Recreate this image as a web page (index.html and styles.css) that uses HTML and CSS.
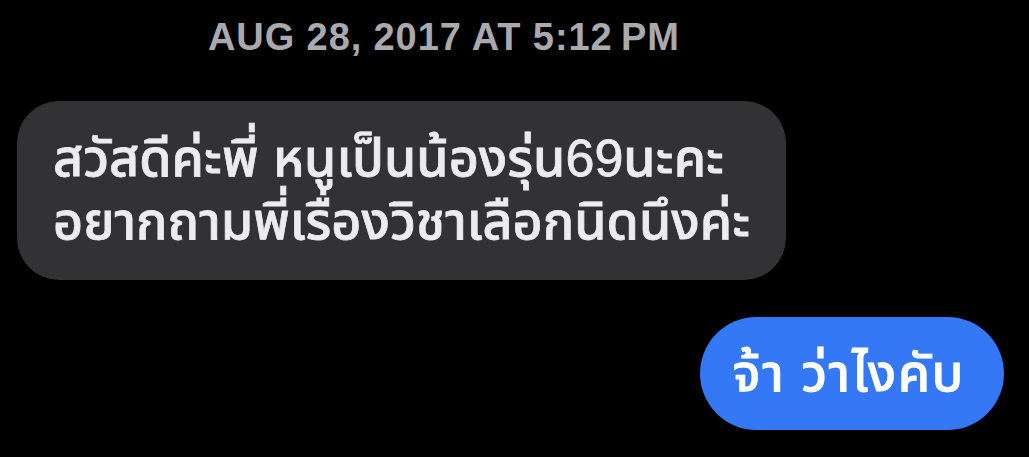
FILE: index.html
```html
<!DOCTYPE html>
<html lang="th">
<head>
<meta charset="UTF-8">
<meta name="viewport" content="width=device-width, initial-scale=1.0">
<title>Messages</title>
<link rel="stylesheet" href="styles.css">
</head>
<body>
    <div class="thread">
        <div class="stamp">AUG 28, 2017 AT 5:12&#8239;PM</div>
        <div class="bubble them">สวัสดีค่ะพี่ หนูเป็นน้องรุ่น69นะคะ<br>อยากถามพี่เรื่องวิชาเลือกนิดนึงค่ะ</div>
        <div class="bubble me">จ้า ว่าไงคับ</div>
    </div>
</body>
</html>
```
FILE: styles.css
```css
body {
    margin: 0;
    padding: 0;
    background: #000;
    font-family: "Liberation Sans", "Noto Sans Thai", "Noto Sans", sans-serif;
}

.thread {
    display: flex;
    flex-direction: column;
    height: 457px;
    overflow: hidden;
}

.stamp {
    margin: 15px 0 0 208px;
    color: #a9a9ae;
    font-size: 38px;
    font-weight: bold;
    line-height: 44px;
    letter-spacing: 0.9px;
}

/* regular weight, thickened a touch to read as semibold */
.bubble {
    font-size: 52px;
    font-weight: 500;
    line-height: 63px;
    color: #ececee;
    -webkit-text-stroke: 0.8px currentColor;
}

.them {
    align-self: flex-start;
    margin: 42px 0 0 17px;
    padding: 26px 36px 27px 36px;
    background: #323234;
    border-radius: 42px;
}

.me {
    align-self: flex-end;
    margin: 37px 25px 0 0;
    padding: 25px 39px 25px 33px;
    background: #3478f6;
    border-radius: 57px;
    color: #fff;
    letter-spacing: 1.5px;
}
```
